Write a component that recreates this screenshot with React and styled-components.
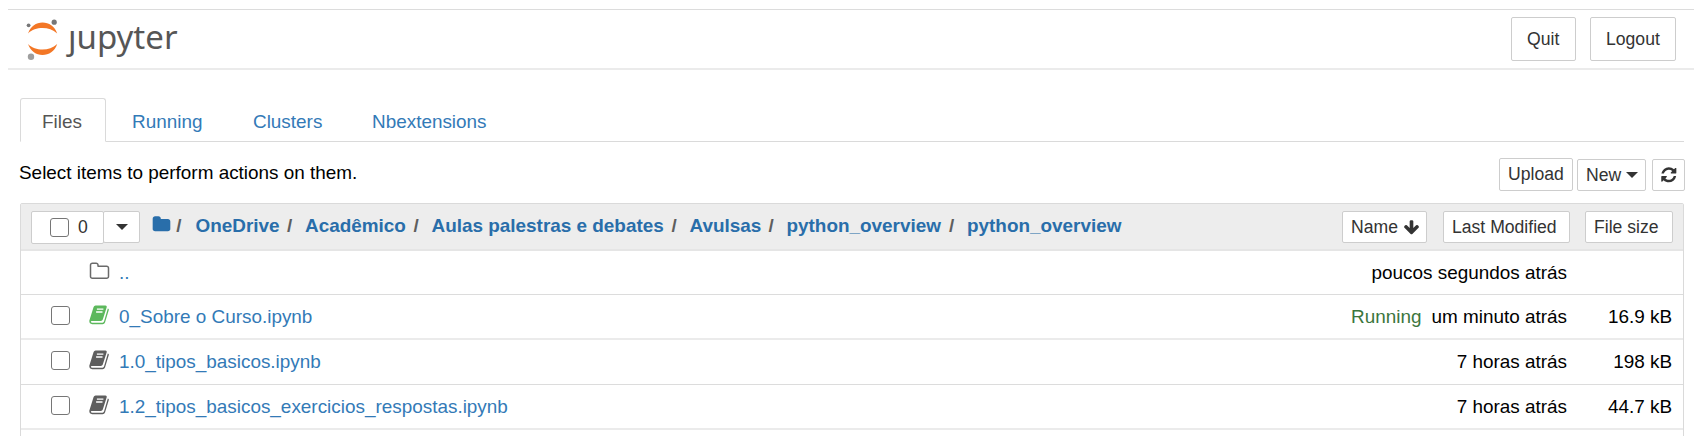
import React from "react";
import styled, { createGlobalStyle } from "styled-components";

const Global = createGlobalStyle`
  * { box-sizing: border-box; }
  body {
    margin: 0;
    background: #fff;
    color: #000;
    font-family: "Liberation Sans", Arial, sans-serif;
    font-size: 18.92px;
    line-height: 24px;
    overflow: hidden;
  }
`;

const Page = styled.div`
  height: 436px;
  overflow: hidden;
  padding: 9px 0 0 8px;
`;
const Header = styled.header`
  display: flex;
  align-items: flex-start;
  height: 61px;
  border-top: 1px solid #dcdcdc;
  border-bottom: 2px solid #ebebeb;
  padding: 7px 18px 0 17px;
`;
const Brand = styled.a`
  display: flex;
  align-items: flex-start;
  flex: 1;
  svg { display: block; }
`;
const Wordmark = styled.span`
  margin: 8px 0 0 7px;
  font-family: "Noto Sans", "Open Sans", sans-serif;
  font-size: 33px;
  line-height: 24px;
  color: #565656;
`;
const Button = styled.button`
  display: flex;
  align-items: center;
  flex: none;
  width: ${(p) => p.$w}px;
  height: ${(p) => p.$h || 32}px;
  margin: 0 0 0 ${(p) => p.$gap || 0}px;
  padding: 0 0 0 ${(p) => p.$pad}px;
  border: 1px solid #cdcdcd;
  border-radius: 2px;
  background: #fff;
  color: #333;
  font: 17.6px "Liberation Sans", Arial, sans-serif;
  white-space: nowrap;
`;
const Content = styled.main`
  margin: 28px 9px 0 12px;
`;
const Tabs = styled.nav`
  display: flex;
  height: 44px;
  border-bottom: 1px solid #dadada;
  margin-right: 1px;
`;
const Tab = styled.a`
  display: block;
  height: 44px;
  width: ${(p) => p.$w}px;
  padding: 11px 0 0 ${(p) => (p.$active ? 21 : 25)}px;
  border: 1px solid ${(p) => (p.$active ? "#dadada" : "transparent")};
  border-bottom-color: ${(p) => (p.$active ? "#fff" : "transparent")};
  border-radius: 3px 3px 0 0;
  color: ${(p) => (p.$active ? "#555" : "#337ab7")};
`;
const Toolbar = styled.div`
  display: flex;
  align-items: flex-end;
  height: 49px;
`;
const Hint = styled.span`
  flex: 1;
  align-self: flex-start;
  margin: 19px 0 0 -1px;
`;
const List = styled.section`
  margin: 12px 1px 0 0;
  border: 1px solid #dadada;
  border-radius: 2px 2px 0 0;
  height: 260px;
`;
const ListHeader = styled.div`
  display: flex;
  height: 47px;
  padding: 7px 10px 0 10px;
  background: #ededed;
  border-bottom: 2px solid #e5e5e5;
`;
const Crumbs = styled.div`
  display: flex;
  flex: 1;
  margin: 3px 0 0 12px;
  white-space: pre;
  svg { margin-top: 1px; }
`;
const Crumb = styled.a`
  width: ${(p) => p.$w}px;
  color: #296eaa;
  font-weight: bold;
`;
const Slash = styled.span`
  width: ${(p) => p.$w || 18}px;
  color: #5e5e5e;
  font-weight: bold;
`;
const Check = styled.span`
  flex: none;
  width: 19px;
  height: 19px;
  border: 1.5px solid #767676;
  border-radius: 3px;
  background: #fff;
  visibility: ${(p) => (p.$hidden ? "hidden" : "visible")};
`;
const Count = styled.span`
  margin-left: 9px;
`;
const Row = styled.div`
  display: flex;
  align-items: flex-start;
  height: ${(p) => p.$h}px;
  padding: 11px 11px 0 30px;
  border-bottom: ${(p) => (p.$soft ? "2px solid #ebebeb" : "1px solid #dcdcdc")};
  svg { margin: -1px 0 0 19px; }
`;
const FileName = styled.a`
  flex: 1;
  margin-left: 9px;
  color: #337ab7;
`;
const Status = styled.span`
  margin-right: 10px;
  color: #3c763d;
`;
const Size = styled.span`
  width: 105px;
  text-align: right;
`;
const Line = styled.div`
  height: 24px;
  display: flex;
  flex: 1;
  margin-top: -1px;
`;

const PATHS = {
  folder:
    "M1728 608v704q0 92-66 158t-158 66h-1216q-92 0-158-66t-66-158v-960q0-92 66-158t158-66h320q92 0 158 66t66 158v32h672q92 0 158 66t66 158z",
  folderOpen:
    "M1600 1312v-704q0-40-28-68t-68-28h-704q-40 0-68-28t-28-68v-64q0-40-28-68t-68-28h-320q-40 0-68 28t-28 68v960q0 40 28 68t68 28h1216q40 0 68-28t28-68zm128-704v704q0 92-66 158t-158 66h-1216q-92 0-158-66t-66-158v-960q0-92 66-158t158-66h320q92 0 158 66t66 158v32h672q92 0 158 66t66 158z",
  refresh:
    "M1639 1056q0 5-1 7-64 268-268 434.5t-478 166.5q-146 0-282.5-55t-243.5-157l-129 129q-19 19-45 19t-45-19-19-45v-448q0-26 19-45t45-19h448q26 0 45 19t19 45-19 45l-137 137q71 66 161 102t187 36q134 0 250-65t186-179q11-17 53-117 8-23 30-23h192q13 0 22.5 9.5t9.5 22.5zm25-800v448q0 26-19 45t-45 19h-448q-26 0-45-19t-19-45 19-45l138-138q-148-137-349-137-134 0-250 65t-186 179q-11 17-53 117-8 23-30 23h-199q-13 0-22.5-9.5t-9.5-22.5v-7q65-268 270-434.5t480-166.5q146 0 284 55.5t245 156.5l130-129q19-19 45-19t45 19 19 45z",
  arrowDown:
    "M1675 832q0 53-37 90l-651 652q-39 37-91 37-53 0-90-37l-651-652q-38-36-38-90 0-53 38-91l74-75q39-37 91-37 53 0 90 37l294 294v-704q0-52 38-90t90-38h128q52 0 90 38t38 90v704l294-294q37-37 90-37 52 0 91 37l75 75q37 39 37 91z",
};

const IconSvg = styled.svg`
  flex: none;
  display: block;
  fill: ${(p) => p.$color};
`;
const Icon = ({ name, size, color }) => (
  <IconSvg $color={color} width={size} height={size} viewBox="0 0 1792 1792">
    <path d={PATHS[name]} />
  </IconSvg>
);

const Notebook = ({ color }) => (
  <IconSvg $color={color} width="21" height="21" viewBox="0 0 21 21">
    <path d="M6.500 0.500H16.500Q18.200 0.600 17.700 2.200L13.800 14.600Q13.300 16 11.800 16H2.500Q1.500 16.200 2 17.300Q2.300 17.700 3.300 17.700H13.600Q14.600 17.600 15 16.500L18.800 3.400Q20.200 3.600 19.800 5L16 17.400Q15.400 19.200 13.600 19.200H3.200Q0.200 18.900 0.300 15.800L4.600 2Q5.200 0.600 6.500 0.500Z" />
    <path d="M7.900 4.200H14.400M7.100 7H13.500" fill="none" stroke="#fff" strokeWidth="1.300" />
  </IconSvg>
);

const CaretSvg = styled.svg`
  flex: none;
  margin-left: ${(p) => p.$gap}px;
`;
const Caret = ({ gap = 0 }) => (
  <CaretSvg $gap={gap} width="12" height="6" viewBox="0 0 12 6">
    <path d="M0 0h12L6 6z" fill="#333" />
  </CaretSvg>
);

const ArrowGap = styled.span`
  margin-left: 5px;
`;

const Logo = () => (
  <svg width="36" height="46" viewBox="25 17 36 46">
    <path d="M28 33.5C31 26 36 22.500 42.500 22.500S54.500 26 57.200 33.500C53 29.500 48 28 42.500 28S32 29.500 28 33.500z" fill="#f37726" />
    <path d="M28 44C31 51.500 36 55 42.500 55S54.500 51.500 57.200 44C53 48 48 49.500 42.500 49.500S32 48 28 44z" fill="#f37726" />
    <circle cx="28.600" cy="25.300" r="1.900" fill="#767677" />
    <circle cx="54.200" cy="22.200" r="2.600" fill="#767677" />
    <circle cx="31" cy="56.700" r="3.200" fill="#9e9e9e" />
  </svg>
);

const tabs = [
  { label: "Files", w: 86, active: true },
  { label: "Running", w: 121 },
  { label: "Clusters", w: 119 },
  { label: "Nbextensions", w: 160 },
];
const crumbs = [
  { label: "OneDrive", w: 91.5 },
  { label: "Acadêmico", w: 108.5 },
  { label: "Aulas palestras e debates", w: 240 },
  { label: "Avulsas", w: 79 },
  { label: "python_overview", w: 162.5 },
  { label: "python_overview", w: 160, last: true },
];
const files = [
  { name: "..", icon: "folderOpen", color: "#6a6a6a", date: "poucos segundos atrás", size: "", h: 44, parent: true },
  { name: "0_Sobre o Curso.ipynb", icon: "book", color: "#5cb85c", date: "um minuto atrás", size: "16.9 kB", h: 45, soft: true, running: true },
  { name: "1.0_tipos_basicos.ipynb", icon: "book", color: "#5e5e5e", date: "7 horas atrás", size: "198 kB", h: 45 },
  { name: "1.2_tipos_basicos_exercicios_respostas.ipynb", icon: "book", color: "#5e5e5e", date: "7 horas atrás", size: "44.7 kB", h: 45, soft: true },
];

export default function App() {
  return (
    <Page>
      <Global />
      <Header>
        <Brand>
          <Logo />
          <Wordmark>ȷupyter</Wordmark>
        </Brand>
        <Button $w={65} $h={44} $pad={15}>Quit</Button>
        <Button $w={86} $h={44} $pad={15} $gap={14}>Logout</Button>
      </Header>
      <Content>
        <Tabs>
          {tabs.map((t) => (
            <Tab key={t.label} $w={t.w} $active={t.active}>{t.label}</Tab>
          ))}
        </Tabs>
        <Toolbar>
          <Hint>Select items to perform actions on them.</Hint>
          <Button $w={74} $h={33} $pad={8}>Upload</Button>
          <Button $w={69} $pad={8} $gap={4}>New<Caret gap={5} /></Button>
          <Button $w={33} $pad={7} $gap={6}><Icon name="refresh" size={17.6} color="#333" /></Button>
        </Toolbar>
        <List>
          <ListHeader>
            <Button $w={73} $h={33} $pad={18} as="div"><Check /><Count>0</Count></Button>
            <Button $w={37} $pad={12} $gap={-1}><Caret /></Button>
            <Crumbs>
              <Icon name="folder" size={19} color="#296eaa" />
              <Slash $w={24.5}>{" "}/</Slash>
              {crumbs.map((c, i) => (
                <React.Fragment key={i}>
                  <Crumb $w={c.w}>{c.label}</Crumb>
                  {!c.last && <Slash>/</Slash>}
                </React.Fragment>
              ))}
            </Crumbs>
            <Button $w={85} $pad={8}>Name<ArrowGap><Icon name="arrowDown" size={17} color="#333" /></ArrowGap></Button>
            <Button $w={127} $pad={8} $gap={16}>Last Modified</Button>
            <Button $w={88} $pad={8} $gap={15}>File size</Button>
          </ListHeader>
          {files.map((f) => (
            <Row key={f.name} $h={f.h} $soft={f.soft}>
              <Check $hidden={f.parent} />
              {f.icon === "book" ? <Notebook color={f.color} /> : <Icon name={f.icon} size={21} color={f.color} />}
              <Line>
                <FileName>{f.name}</FileName>
                {f.running && <Status>Running</Status>}
                <span>{f.date}</span>
                <Size>{f.size}</Size>
              </Line>
            </Row>
          ))}
        </List>
      </Content>
    </Page>
  );
}
